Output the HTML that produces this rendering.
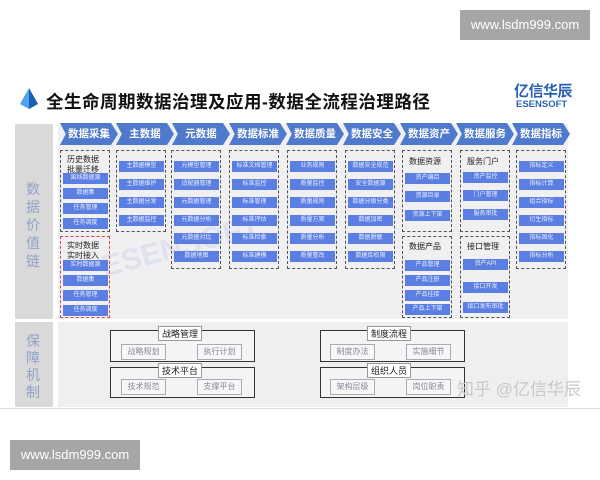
<!DOCTYPE html>
<html><head><meta charset="utf-8"><style>
*{margin:0;padding:0;box-sizing:border-box}
body{width:600px;height:480px;background:#fff;position:relative;overflow:hidden;font-family:"Liberation Sans","Noto Sans CJK SC",sans-serif}
div{position:absolute}
.wm{background:#a6a6a6;color:#fff;font-size:13px;line-height:30px;text-align:center}
.chev{top:123px;height:22px;width:58px;background:#4f79cc;color:#fff;font-size:10.5px;font-weight:bold;line-height:22px;text-align:center;clip-path:polygon(0 0,88% 0,100% 50%,88% 100%,0 100%,10% 50%)}
.box{border:1px dashed #555;width:50px}
.b{width:45px;height:11px;background:#5b7ee3;color:#e8eeff;font-size:6px;line-height:11px;text-align:center;left:2px}
.h{font-size:8px;color:#222;left:6px;line-height:10px}
.g{border:1.5px solid #333;background:#f4f4f4}
.tab{background:#fff;border:1px solid #999;font-size:9px;color:#222;text-align:center;line-height:14px;width:44px;height:15px}
.sb{background:#f7f7f7;border:1px solid #aab;font-size:8px;color:#889;text-align:center;line-height:14px;width:45px;height:16px}
</style></head><body>
<div class="wm" style="left:460px;top:10px;width:130px">www.lsdm999.com</div>
<div class="wm" style="left:10px;top:440px;width:130px">www.lsdm999.com</div>
<svg style="position:absolute;left:20px;top:88px" width="18" height="22" viewBox="0 0 18 22"><polygon points="9,0 18,16 9,21" fill="#1a5fb4"/><polygon points="9,0 0,16 9,21" fill="#4ea3ea"/></svg>
<div style="left:46px;top:89px;font-size:17.5px;font-weight:bold;color:#111;white-space:nowrap;letter-spacing:0.5px">全生命周期数据治理及应用-数据全流程治理路径</div>
<div style="left:514px;top:80px;font-size:15px;font-weight:bold;color:#2a62b8;letter-spacing:-0.5px">亿信华辰</div>
<div style="left:516px;top:99px;font-size:9.5px;font-weight:bold;color:#2a62b8">ESENSOFT</div>
<div style="left:0;top:408px;width:600px;height:1px;background:#ddd"></div>
<div style="left:15px;top:124px;width:38px;height:195px;background:#d9d9d9"></div>
<div style="left:15px;top:322px;width:38px;height:85px;background:#d9d9d9"></div>
<div style="left:58px;top:124px;width:510px;height:195px;background:#f0f0f2"></div>
<div style="left:58px;top:322px;width:510px;height:85px;background:#efeff0"></div>
<div style="left:26px;top:180px;width:16px;font-size:14px;line-height:18px;color:#8fa3c8">数据价值链</div>
<div style="left:26px;top:333px;width:16px;font-size:14px;line-height:17px;color:#8fa3c8">保障机制</div>
<div style="left:100px;top:230px;font-size:30px;font-weight:bold;color:#dfe2ee;transform:rotate(-15deg)">ESENSOFT</div>

<div class="chev" style="left:60px">数据采集</div>
<div class="chev" style="left:116px">主数据</div>
<div class="chev" style="left:172px">元数据</div>
<div class="chev" style="left:229px">数据标准</div>
<div class="chev" style="left:286px">数据质量</div>
<div class="chev" style="left:343px">数据安全</div>
<div class="chev" style="left:400px">数据资产</div>
<div class="chev" style="left:456px">数据服务</div>
<div class="chev" style="left:512px">数据指标</div>

<div class="box" style="left:60px;top:150px;height:82px"><div class="h" style="top:4px">历史数据<br>批量迁移</div><div class="b" style="top:22px">离线数据源</div><div class="b" style="top:37px">数据集</div><div class="b" style="top:52px">任务管理</div><div class="b" style="top:67px">任务调度</div></div>
<div class="box" style="left:60px;top:236px;height:82px;border-color:#d44"><div class="h" style="top:4px">实时数据<br>实时接入</div><div class="b" style="top:23px">实时数据源</div><div class="b" style="top:38px">数据集</div><div class="b" style="top:53px">任务管理</div><div class="b" style="top:68px">任务调度</div></div>

<div class="box" style="left:116px;top:150px;height:82px"><div class="b" style="top:10px">主数据模型</div><div class="b" style="top:28px">主数据维护</div><div class="b" style="top:46px">主数据分发</div><div class="b" style="top:64px">主数据监控</div></div>
<div class="box" style="left:171px;top:150px;height:119px"><div class="b" style="top:10px">元模型管理</div><div class="b" style="top:28px">适配器管理</div><div class="b" style="top:46px">元数据管理</div><div class="b" style="top:64px">元数据分析</div><div class="b" style="top:82px">元数据对比</div><div class="b" style="top:100px">数据地图</div></div>
<div class="box" style="left:229px;top:150px;height:119px"><div class="b" style="top:10px">标准文档管理</div><div class="b" style="top:28px">标准监控</div><div class="b" style="top:46px">标准管理</div><div class="b" style="top:64px">标准评估</div><div class="b" style="top:82px">标准检索</div><div class="b" style="top:100px">标准建模</div></div>
<div class="box" style="left:287px;top:150px;height:119px"><div class="b" style="top:10px">业务规则</div><div class="b" style="top:28px">质量监控</div><div class="b" style="top:46px">质量规则</div><div class="b" style="top:64px">质量方案</div><div class="b" style="top:82px">质量分析</div><div class="b" style="top:100px">质量整改</div></div>
<div class="box" style="left:345px;top:150px;height:119px"><div class="b" style="top:10px">数据安全规范</div><div class="b" style="top:28px">安全数据源</div><div class="b" style="top:46px">数据分级分类</div><div class="b" style="top:64px">数据加密</div><div class="b" style="top:82px">数据脱敏</div><div class="b" style="top:100px">数据库权限</div></div>
<div class="box" style="left:402px;top:150px;height:82px"><div class="h" style="top:6px">数据资源</div><div class="b" style="top:22px">资产编目</div><div class="b" style="top:40px">资源目录</div><div class="b" style="top:59px">资源上下架</div></div>
<div class="box" style="left:402px;top:236px;height:82px"><div class="h" style="top:5px">数据产品</div><div class="b" style="top:23px">产品管理</div><div class="b" style="top:38px">产品注册</div><div class="b" style="top:53px">产品挂接</div><div class="b" style="top:67px">产品上下架</div></div>
<div class="box" style="left:460px;top:150px;height:82px"><div class="h" style="top:6px">服务门户</div><div class="b" style="top:21px">资产监控</div><div class="b" style="top:39px">门户管理</div><div class="b" style="top:58px">服务审批</div></div>
<div class="box" style="left:460px;top:236px;height:82px"><div class="h" style="top:5px">接口管理</div><div class="b" style="top:22px">资产API</div><div class="b" style="top:45px">接口开发</div><div class="b" style="top:65px">接口发布审批</div></div>
<div class="box" style="left:516px;top:150px;height:119px"><div class="b" style="top:10px">指标定义</div><div class="b" style="top:28px">指标计算</div><div class="b" style="top:46px">组合指标</div><div class="b" style="top:64px">衍生指标</div><div class="b" style="top:82px">指标固化</div><div class="b" style="top:100px">指标分析</div></div>

<div class="g" style="left:110px;top:330px;width:145px;height:32px"></div>
<div class="tab" style="left:158px;top:326px">战略管理</div>
<div class="sb" style="left:121px;top:344px">战略规划</div><div class="sb" style="left:197px;top:344px">执行计划</div>
<div class="g" style="left:110px;top:367px;width:145px;height:31px"></div>
<div class="tab" style="left:158px;top:363px">技术平台</div>
<div class="sb" style="left:121px;top:379px">技术规范</div><div class="sb" style="left:197px;top:379px">支撑平台</div>
<div class="g" style="left:320px;top:330px;width:145px;height:32px"></div>
<div class="tab" style="left:367px;top:326px">制度流程</div>
<div class="sb" style="left:330px;top:344px">制度办法</div><div class="sb" style="left:406px;top:344px">实施细节</div>
<div class="g" style="left:320px;top:367px;width:145px;height:31px"></div>
<div class="tab" style="left:367px;top:363px">组织人员</div>
<div class="sb" style="left:330px;top:379px">架构层级</div><div class="sb" style="left:406px;top:379px">岗位职责</div>
<div style="left:457px;top:375px;font-size:17px;color:#c8c8c8;white-space:nowrap">知乎 @亿信华辰</div>
</body></html>
